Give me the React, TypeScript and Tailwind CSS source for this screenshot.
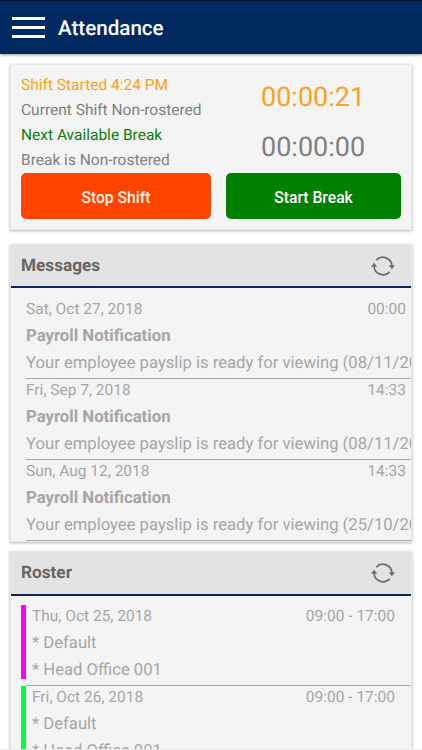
import React from "react";

const messages = [
  { date: "Sat, Oct 27, 2018", time: "00:00", body: "Your employee payslip is ready for viewing (08/11/2018)" },
  { date: "Fri, Sep 7, 2018", time: "14:33", body: "Your employee payslip is ready for viewing (08/11/2018)" },
  { date: "Sun, Aug 12, 2018", time: "14:33", body: "Your employee payslip is ready for viewing (25/10/2018)" },
];

const shifts = [
  { date: "Thu, Oct 25, 2018", hours: "09:00 - 17:00", bar: "bg-[#ff00ff]" },
  { date: "Fri, Oct 26, 2018", hours: "09:00 - 17:00", bar: "bg-[#00ff40]" },
];

const card = "mx-[10px] w-[402px] border border-[#e9e9e9] bg-[#f4f4f4] shadow-[0_1px_3px_rgba(0,0,0,0.3)]";

function RefreshIcon() {
  return (
    <svg width="24" height="20" viewBox="0 0 24 20" fill="none" stroke="#6c6c6c" strokeWidth="1.7">
      <path d="M5.3 4.2A9 9 0 0 1 20.9 10" />
      <path d="M18.7 15.8A9 9 0 0 1 3.1 10" />
      <path d="M17.8 9.3H24l-3.1 4zM0 10.7h6.2L3.1 6.7z" fill="#6c6c6c" stroke="none" />
    </svg>
  );
}

function PanelHeader({ title, height }: { title: string; height: string }) {
  return (
    <div className={`flex ${height} items-center justify-between border-b-2 border-[#0d2557] bg-[#e3e3e3] pl-[10px] pr-[16px]`}>
      <h2 className="pt-[2px] text-[17.2px] font-bold text-[#666]">{title}</h2>
      <RefreshIcon />
    </div>
  );
}

export default function App() {
  return (
    <div className="flex h-[750px] w-full flex-col overflow-hidden bg-white font-[Roboto,sans-serif] text-[15.5px] [text-rendering:geometricPrecision]">
      <header className="flex h-[54px] shrink-0 items-center border-t border-[#001538] bg-[#00295f] pl-[12px] shadow-[0_1px_3px_rgba(0,0,0,0.4)]">
        <div className="flex w-[33px] flex-col gap-[6px]">
          <span className="h-[3px] bg-white" />
          <span className="h-[3px] bg-white" />
          <span className="h-[3px] bg-white" />
        </div>
        <h1 className="ml-[13px] pt-[3px] text-[20.6px] font-medium text-white">Attendance</h1>
      </header>

      <section className={`${card} mt-[10px] h-[166px] shrink-0 px-[10px] pt-[8px]`}>
        <div className="flex h-[100px]">
          <div className="w-[240px] whitespace-nowrap text-[#808080]">
            <p className="h-[25px] leading-[24px] text-[#faa21b]">Shift Started 4:24 PM</p>
            <p className="h-[25px] leading-[24px]">Current Shift Non-rostered</p>
            <p className="h-[25px] leading-[24px] text-[#0c800c]">Next Available Break</p>
            <p className="h-[25px] leading-[24px]">Break is Non-rostered</p>
          </div>
          <div className="-mt-px text-[27px] leading-[50px] text-[#808080]">
            <p className="text-[#faa21b]">00:00:21</p>
            <p>00:00:00</p>
          </div>
        </div>
        <div className="flex justify-between">
          <button className="h-[46px] w-[190px] rounded-[5px] bg-[#ff4500] pt-[3px] text-[15.7px] font-medium text-[#fff1e8]">Stop Shift</button>
          <button className="h-[46px] w-[175px] rounded-[5px] bg-[#008000] pt-[3px] text-[15.7px] font-medium text-white">Start Break</button>
        </div>
      </section>

      <section className={`${card} mt-[14px] h-[298px] shrink-0`}>
        <PanelHeader title="Messages" height="h-[43px]" />
        <div className="overflow-hidden pl-[15px] pt-[10px] text-[#a6a6a6]">
          {messages.map((m) => (
            <article key={m.date} className="flex h-[81px] flex-col whitespace-nowrap border-b border-[#a9a9a9] leading-[27px]">
              <div className="-mt-[2px] flex justify-between pr-[5px]">
                <span>{m.date}</span>
                <span>{m.time}</span>
              </div>
              <p className="text-[16.75px] font-bold">Payroll Notification</p>
              <p className="text-[16.65px]">{m.body}</p>
            </article>
          ))}
        </div>
      </section>

      <section className={`${card} mt-[9px] min-h-0 flex-1 overflow-hidden border-b-0`}>
        <PanelHeader title="Roster" height="h-[44px]" />
        <div className="pl-[10px] pt-[9px] text-[#a6a6a6]">
          {shifts.map((s) => (
            <article key={s.date} className="flex h-[81px]">
              <div className={`h-[74px] w-[5px] ${s.bar}`} />
              <div className="flex-1 border-b border-[#a9a9a9] pl-[6px] leading-[27px]">
                <div className="-mt-[2px] flex justify-between pr-[16px]">
                  <span>{s.date}</span>
                  <span>{s.hours}</span>
                </div>
                <p className="text-[16.65px]">* Default</p>
                <p className="text-[16.65px]">* Head Office 001</p>
              </div>
            </article>
          ))}
        </div>
      </section>
      <div className="h-px shrink-0 bg-[#ededed]" />
    </div>
  );
}
